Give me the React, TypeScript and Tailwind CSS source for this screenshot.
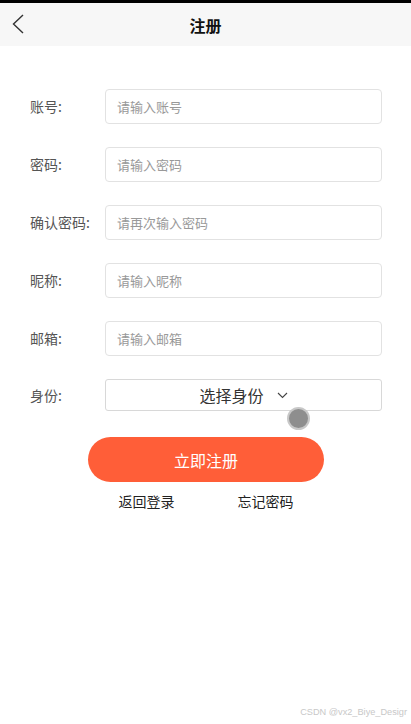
const fields = [
  { label: "账号:", placeholder: "请输入账号" },
  { label: "密码:", placeholder: "请输入密码" },
  { label: "确认密码:", placeholder: "请再次输入密码" },
  { label: "昵称:", placeholder: "请输入昵称" },
  { label: "邮箱:", placeholder: "请输入邮箱" },
];

const font = "font-['Noto_Sans_CJK_SC','Noto_Sans',sans-serif]";

export default function App() {
  return (
    <div className={`relative w-[411px] h-[724px] bg-white ${font}`}>
      <div className="h-[3px] bg-black" />
      <div className="relative h-[43px] bg-[#f7f7f7] flex items-center justify-center">
        <svg className="absolute left-[12px] top-[11px]" width="12" height="20" viewBox="0 0 12 20" fill="none">
          <polyline points="11,1 1.5,10 11,19" stroke="#333" strokeWidth="1.4" />
        </svg>
        <span className="text-[16px] font-bold text-[#111]">注册</span>
      </div>

      <div className="pt-[43px] flex flex-col gap-[23px]">
        {fields.map((f) => (
          <div key={f.label} className="flex items-center">
            <span className="w-[105px] pl-[30px] text-[14px] text-[#555]">{f.label}</span>
            <div className="w-[277px] h-[35px] border border-[#e2e2e2] rounded-[4px] flex items-center pl-[11px] text-[13px] text-[#999]">
              {f.placeholder}
            </div>
          </div>
        ))}
        <div className="flex items-center">
          <span className="w-[105px] pl-[30px] text-[14px] text-[#555]">身份:</span>
          <div className="relative w-[277px] h-[32px] border border-[#d8d8d8] rounded-[3px] flex items-center justify-center text-[16px] text-[#333]">
            <span>选择身份</span>
            <svg className="ml-[13px]" width="11" height="7" viewBox="0 0 11 7" fill="none">
              <polyline points="1,1 5.5,5.5 10,1" stroke="#444" strokeWidth="1.1" />
            </svg>
            <div className="absolute left-[181px] top-[27px] w-[23px] h-[23px] rounded-full bg-[#8e8e8e] border-2 border-[#c8c8c8]" />
          </div>
        </div>
      </div>

      <div className="mt-[26px] flex justify-center pl-[1px]">
        <button className="w-[236px] h-[45px] rounded-full bg-[#ff5e38] text-white text-[16px]">立即注册</button>
      </div>

      <div className="mt-[9px] flex justify-center gap-[63px] pl-[1px] text-[14px] text-[#222]">
        <span>返回登录</span>
        <span>忘记密码</span>
      </div>

      <div className="absolute right-[4px] bottom-[4px] text-[9.2px] text-[#c8c8c8] font-['Liberation_Sans',sans-serif]">
        CSDN @vx2_Biye_Desigr
      </div>
    </div>
  );
}
